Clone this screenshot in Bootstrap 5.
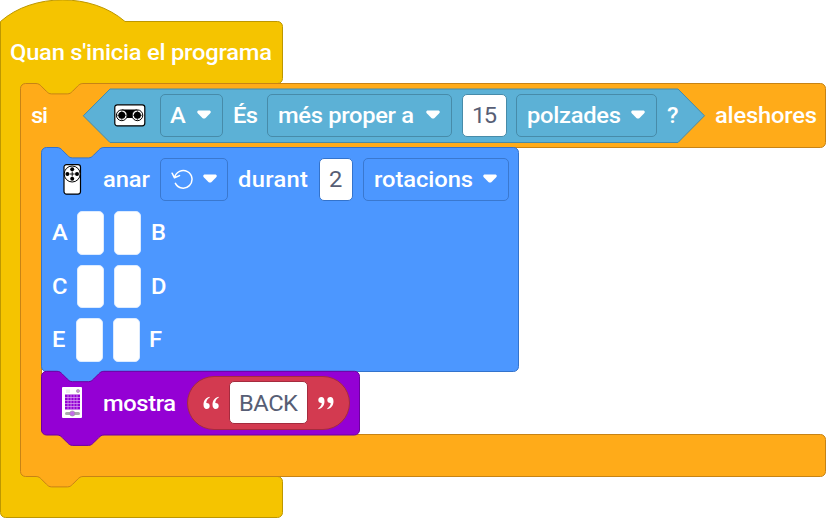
<!DOCTYPE html>
<html lang="ca">
<head>
<meta charset="utf-8">
<meta name="viewport" content="width=device-width, initial-scale=1">
<title>Programa</title>
<link href="https://cdn.jsdelivr.net/npm/bootstrap@5.3.0/dist/css/bootstrap.min.css" rel="stylesheet">
<style>
body{font-family:Roboto,"Liberation Sans",sans-serif;font-size:22.600px;font-weight:500;line-height:1.2;background:#fff}
.workspace{width:826px;height:518px}
.shapes,.workspace svg{display:block;flex:none}
.stack{z-index:1}
.label{flex:none;display:block;white-space:nowrap;width:var(--w);padding-top:2px}
.label>span{display:inline-block;transform-origin:0 50%}
.hat-row{height:84px;padding:20px 0 0 10px}
.if-row{height:64px;padding:0 0 2px 31px}
.move-row{height:58px;padding:4px 0 0 62px}
.port-row{height:53.5px;padding-left:51.500px}
.port-row .label{padding-top:0}
.port-row.last-row{margin-bottom:4.5px}
.show-row{height:64px;padding:0 0 1px 61px}
.pick,.entry{flex:none;height:43px;border:1px solid;border-radius:5px}
.pick.sensing{border-color:#478ba9}
.pick.motion{border-color:#3a78cf}
.entry{background:#fff;color:#575e75;font-weight:400}
.entry.sensing{border-color:#478ba9}
.entry.motion{border-color:#3373cc}
.entry.string{border-color:#a52b3e}
.port{flex:none;width:27px;height:43.5px;border-radius:5px;background:#fff;border:1px solid #dcebff}
</style>
</head>
<body>
<main class="workspace position-relative overflow-hidden text-white">
<svg class="shapes position-absolute top-0 start-0" width="826" height="518" viewBox="0 0 826 518" aria-hidden="true">
 <path fill="#f5c400" stroke="#bd9700" d="M.5 21.5C33-7.3 92-7.3 125 21.500H277.500a5 5 0 0 1 5 5V78.500a5 5 0 0 1-5 5H20.500V476.500H277.500a5 5 0 0 1 5 5V512.500a5 5 0 0 1-5 5H5.500a5 5 0 0 1-5-5Z"/>
 <path fill="#f5c400" d="M20 83h70v15H20zM20 470h70v19H20z"/>
 <path fill="#ffab19" stroke="#c78315" d="M20.500 88.500a5 5 0 0 1 5-5H36c2.600 0 3.900 1.300 5.200 2.600l5.200 5.200c1.300 1.300 2.600 2.600 5.200 2.600h15.700c2.600 0 3.900-1.300 5.200-2.600l5.200-5.200c1.300-1.300 2.600-2.600 5.200-2.600H820.500a5 5 0 0 1 5 5V142.500a5 5 0 0 1-5 5H41.500V434.500H820.500a5 5 0 0 1 5 5V471.500a5 5 0 0 1-5 5H83c-2.600 0-3.900 1.300-5.200 2.600l-5.200 5.200c-1.300 1.300-2.600 2.600-5.200 2.600H51.700c-2.600 0-3.900-1.300-5.200-2.600l-5.200-5.200c-1.300-1.300-2.600-2.600-5.200-2.600H25.500a5 5 0 0 1-5-5Z"/>
 <path fill="#ffab19" d="M41 147h68v15H41zM41 430h68v19H41z"/>
 <path fill="#5cb1d6" stroke="#478ba9" d="M110 89H678l26.500 26.800L678 142.500H110L83.300 115.800Z"/>
 <path fill="#4c97ff" stroke="#3373cc" d="M41.500 152.500a5 5 0 0 1 5-5H57c2.600 0 3.900 1.300 5.200 2.600l5.200 5.200c1.300 1.300 2.600 2.600 5.200 2.600h15.700c2.600 0 3.900-1.300 5.200-2.600l5.200-5.200c1.300-1.300 2.600-2.600 5.200-2.600H513.500a5 5 0 0 1 5 5V366.500a5 5 0 0 1-5 5H104V383H56V371.500H46.500a5 5 0 0 1-5-5Z"/>
 <path fill="#9400d4" stroke="#6c00a0" d="M41.500 376.300a5 5 0 0 1 5-5H57c2.600 0 3.900 1.300 5.200 2.600l5.200 5.200c1.300 1.300 2.600 2.600 5.200 2.600h15.700c2.600 0 3.900-1.300 5.200-2.600l5.200-5.200c1.300-1.300 2.600-2.600 5.200-2.600H354.500a5 5 0 0 1 5 5V430a5 5 0 0 1-5 5H104c-2.600 0-3.900 1.300-5.200 2.600l-5.200 5.200c-1.300 1.300-2.600 2.600-5.200 2.600H72.700c-2.600 0-3.900-1.300-5.200-2.600l-5.200-5.200c-1.300-1.300-2.600-2.600-5.200-2.600H46.500a5 5 0 0 1-5-5Z"/>
 <rect x="187.500" y="376.500" width="162" height="53" rx="26.500" fill="#d33a50" stroke="#a52b3e"/>
</svg>
<svg width="0" height="0" class="position-absolute" aria-hidden="true">
 <symbol id="caret" viewBox="0 0 14 10"><path d="M2 .5H12C13.800 .5 14.200 2 13.200 3.200L8.600 7.900Q7 9.300 5.400 7.900L.8 3.200C-.2 2 .2 .5 2 .5Z" fill="#fff"/></symbol>
</svg>

<div class="stack position-relative d-flex flex-column">
 <div class="hat-row d-flex align-items-center"><span class="label" style="--w:262px">Quan s'inicia el programa</span></div>

 <div class="if-row d-flex align-items-center">
  <span class="label" style="--w:17px">si</span>
  <svg width="32" height="23" viewBox="0 0 32 23" style="margin-left:65.500px"><rect x=".8" y=".8" width="30" height="21" rx="2.500" fill="#fff" stroke="#000" stroke-width="1.200"/><path d="M8 5.500H23V12.500H20L18.500 14H12.500L11 12.500H8Z"/><g stroke="#000" fill="#fff"><circle cx="7.800" cy="11.300" r="5.400"/><circle cx="23.400" cy="11.300" r="5.400"/></g><g><circle cx="7.800" cy="11.300" r="3.500"/><circle cx="23.400" cy="11.300" r="3.500"/></g><path d="M7.800 6v10.500M2.500 11.300h10.600M23.400 6v10.500M18.100 11.300h10.600" stroke="#000" stroke-width=".6"/></svg>
  <div class="pick sensing d-flex align-items-center" style="width:63px;margin-left:14px;padding-left:9px"><span class="label" style="--w:17px">A</span><svg width="14" height="10" style="margin-left:10.500px"><use href="#caret"/></svg></div>
  <span class="label" style="--w:25px;margin-left:10px">És</span>
  <div class="pick sensing d-flex align-items-center" style="width:185px;margin-left:9.500px;padding-left:10px"><span class="label" style="--w:136px">més proper a</span><svg width="14" height="10" style="margin-left:12px"><use href="#caret"/></svg></div>
  <div class="entry sensing d-flex align-items-center justify-content-center" style="width:45px;margin-left:9.500px"><span class="label" style="--w:25px">15</span></div>
  <div class="pick sensing d-flex align-items-center" style="width:141px;margin-left:9.500px;padding-left:9.500px"><span class="label" style="--w:94px">polzades</span><svg width="14" height="10" style="margin-left:10.500px"><use href="#caret"/></svg></div>
  <span class="label" style="--w:13px;margin-left:9.500px">?</span>
  <span class="label" style="--w:102px;margin-left:35px">aleshores</span>
 </div>

 <div class="move-row d-flex align-items-center">
  <svg width="20" height="32" viewBox="0 0 20 32"><rect x="2" y="1.600" width="16.500" height="29.500" rx="2.500" fill="#fff" stroke="#000" stroke-width="1.200"/><circle cx="10.200" cy="11" r="8" fill="#fff" stroke="#000"/><g><circle cx="10.200" cy="6.200" r="2"/><circle cx="10.200" cy="15.800" r="2"/><circle cx="5.400" cy="11" r="2"/><circle cx="15" cy="11" r="2"/></g><path d="M10.200 8.500v5M7.700 11h5" stroke="#000" stroke-width=".9"/></svg>
  <span class="label" style="--w:47px;margin-left:20.500px">anar</span>
  <div class="pick motion d-flex align-items-center" style="width:68px;margin-left:10.500px;padding-left:9px"><svg width="23" height="22" viewBox="0 0 23 22"><path d="M4.600 9.500A8.800 8.800 0 1 1 5.400 15.400M2.100 5.200L4.500 9.800L9.500 7.600" fill="none" stroke="#fff" stroke-width="1.500" stroke-linecap="round" stroke-linejoin="round"/></svg><svg width="14" height="10" style="margin-left:10px"><use href="#caret"/></svg></div>
  <span class="label" style="--w:70px;margin-left:10px">durant</span>
  <div class="entry motion d-flex align-items-center justify-content-center" style="width:34px;margin-left:11px"><span class="label" style="--w:14px">2</span></div>
  <div class="pick motion d-flex align-items-center" style="width:146px;margin-left:10px;padding-left:9.500px"><span class="label" style="--w:99px">rotacions</span><svg width="14" height="10" style="margin-left:10.500px"><use href="#caret"/></svg></div>
 </div>
 <div class="port-row d-flex align-items-center"><span class="label" style="--w:16px">A</span><div class="port" style="margin-left:9.500px"></div><div class="port" style="margin-left:10px"></div><span class="label" style="--w:16px;margin-left:10px">B</span></div>
 <div class="port-row d-flex align-items-center"><span class="label" style="--w:16px">C</span><div class="port" style="margin-left:9.500px"></div><div class="port" style="margin-left:10px"></div><span class="label" style="--w:16px;margin-left:10px">D</span></div>
 <div class="port-row last-row d-flex align-items-center"><span class="label" style="--w:15px">E</span><div class="port" style="margin-left:9px"></div><div class="port" style="margin-left:10px"></div><span class="label" style="--w:14px;margin-left:9.500px">F</span></div>

 <div class="show-row d-flex align-items-center">
  <svg width="22" height="32" viewBox="0 0 22 32"><rect x="1" y="0" width="20" height="31" rx="1" fill="#fff"/><rect x="5" y="2.500" width="4" height="3.500" fill="#eee"/><circle cx="17" cy="4" r="1.600" fill="#c98bdf" stroke="#999" stroke-width=".6"/><rect x="4" y="7.500" width="15" height="15" fill="#9400d4"/><path d="M7 7.500v15M10 7.500v15M13 7.500v15M16 7.500v15M4 10.500h15M4 13.500h15M4 16.500h15M4 19.500h15" stroke="#dba6f2" stroke-width=".7"/><rect x="4" y="25" width="15" height="3" rx="1.500" fill="#aaa"/><circle cx="11.300" cy="26.500" r="2.600" fill="#c46be8" stroke="#999" stroke-width=".6"/></svg>
  <span class="label" style="--w:73px;margin-left:20px">mostra</span>
  <svg width="17" height="14" viewBox="0 0 17 14" style="margin-left:27px"><g id="quote" fill="#fff"><path d="M6.500 .8C3 1.500 .5 4.700 .5 8.800C.5 11.500 1.700 13 3.600 13C5.400 13 6.700 11.700 6.700 9.900C6.700 8 5.500 6.900 3.300 7C3.400 4.700 4.500 2.800 6.800 1.600Z"/><path d="M15.500 .8C12 1.500 9.500 4.700 9.500 8.800C9.500 11.500 10.700 13 12.600 13C14.400 13 15.700 11.700 15.700 9.900C15.700 8 14.500 6.900 12.300 7C12.400 4.700 13.500 2.800 15.800 1.600Z"/></g></svg>
  <div class="entry string d-flex align-items-center justify-content-center" style="width:79px;margin-left:8.500px"><span class="label" style="--w:59px">BACK</span></div>
  <svg width="17" height="14" viewBox="0 0 17 14" style="margin-left:9px"><use href="#quote" transform="rotate(180 8.500 7)"/></svg>
 </div>
</div>
</main>
<script src="https://cdn.jsdelivr.net/npm/bootstrap@5.3.0/dist/js/bootstrap.bundle.min.js"></script>
<script>
// Widen each label slightly, then spread its letters over the width reserved in its block.
document.querySelectorAll('.label').forEach(function(el){
  var stretch = 1.05, n = el.textContent.length, s = document.createElement('span');
  s.textContent = el.textContent;
  el.replaceChildren(s);
  if (n < 2) { s.style.transform = 'scaleX(' + stretch + ')'; return; }
  var natural = s.getBoundingClientRect().width;
  s.style.letterSpacing = ((el.clientWidth / stretch - natural) / (n - 1)).toFixed(3) + 'px';
  s.style.transform = 'scaleX(' + stretch + ')';
});
</script>
</body>
</html>
